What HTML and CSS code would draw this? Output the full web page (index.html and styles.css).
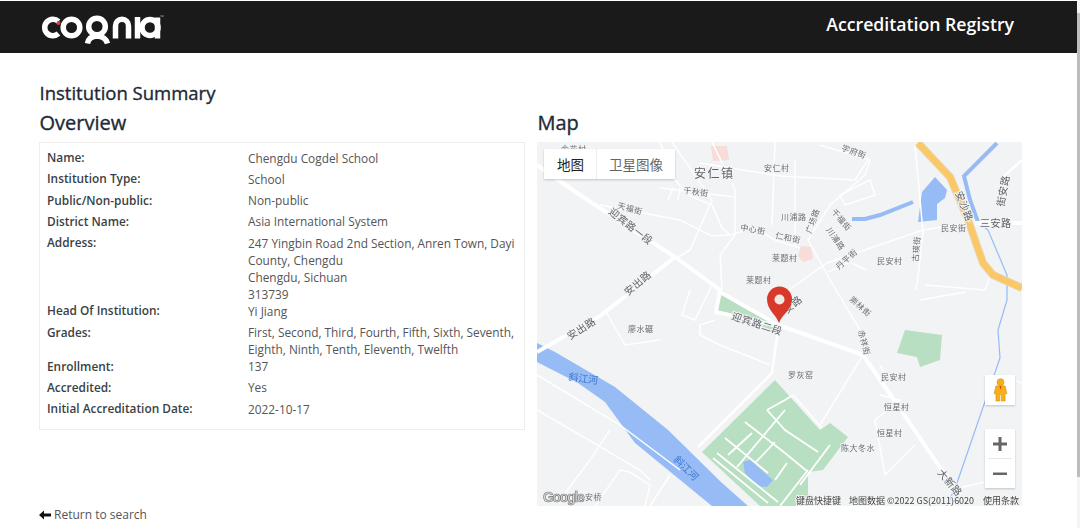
FILE: index.html
```html
<!DOCTYPE html>
<html lang="en">
<head>
<meta charset="utf-8">
<title>Accreditation Registry</title>
<link rel="stylesheet" href="styles.css">
</head>
<body>
<header class="topbar">
  <svg class="logo" viewBox="40 13 125 32" role="img" aria-label="cognia">
    <g class="logo-stroke">
      <path d="M58.500 21.500 A8.200 8.200 0 1 0 58.500 33.500"/>
      <circle cx="71.500" cy="27.500" r="8.300"/>
      <circle cx="97" cy="26.500" r="8.300"/>
      <path d="M87.500 43.500 Q88.500 36.500 97 36 Q105.500 36.500 107.500 43.500"/>
      <path d="M115.500 38.500 V26 A6.200 6.500 0 0 1 128.500 26 V38.500"/>
      <path d="M137.500 17 V38.500"/>
      <circle cx="150" cy="27.500" r="8"/>
      <path d="M157.500 17.500 V38.500"/>
    </g>
    <circle class="logo-dot" cx="58.500" cy="23" r="2"/>
    <text class="logo-tm" x="160" y="19">™</text>
  </svg>
  <div class="app-title">Accreditation Registry</div>
</header>

<main class="page">
  <h1 class="page-title">Institution Summary</h1>
  <div class="columns">
    <section class="col">
      <h2 class="section-title">Overview</h2>
      <dl class="card">
        <dt>Name:</dt><dd>Chengdu Cogdel School</dd>
        <dt>Institution Type:</dt><dd>School</dd>
        <dt>Public/Non-public:</dt><dd>Non-public</dd>
        <dt>District Name:</dt><dd>Asia International System</dd>
        <dt>Address:</dt><dd>247 Yingbin Road 2nd Section, Anren Town, Dayi County, Chengdu<br>Chengdu, Sichuan<br>313739</dd>
        <dt>Head Of Institution:</dt><dd>Yi Jiang</dd>
        <dt>Grades:</dt><dd>First, Second, Third, Fourth, Fifth, Sixth, Seventh, Eighth, Ninth, Tenth, Eleventh, Twelfth</dd>
        <dt>Enrollment:</dt><dd>137</dd>
        <dt>Accredited:</dt><dd>Yes</dd>
        <dt>Initial Accreditation Date:</dt><dd>2022-10-17</dd>
      </dl>
    </section>
    <section class="col">
      <h2 class="section-title">Map</h2>
      <div class="map">
        <svg class="map-canvas" viewBox="537 142 485 364" aria-label="Map">
          <rect class="land" x="537" y="142" width="485" height="364"/>
          <path class="pink" d="M711 146 L727 146 L729 160 L713 161 Z"/>
          <path class="pink" d="M801 246 L811 247 L813 259 L803 262 L798 256 Z"/>

          <path class="water" d="M537 343 L555 352 L615 387 L668 430 L722 483 L748 506 L712 506 L668 470 L635 443 L605 402 L578 383 L537 362 Z"/>
          <path class="water" d="M935 177 L947 190 L945 198 L937 204 L937 220 L918 222 L922 192 Z"/>
          <path class="canal" d="M852 219 L865 219 L880 215 L913 202"/>
          <path class="canal" d="M997 143 L964 176 L970 200 L978 222"/>
          <path class="stream" d="M978 222 L988 230 L1007 275 L1007 300 L998 330 L1000 358 L957 483 L947 506"/>

          <path class="park" d="M905 330 L942 335 L940 360 L920 367 L917 357 L897 353 Z"/>
          <path class="park" d="M722 293 L777 325 L773 330 L716 313 Z"/>
          <path class="park" d="M775 380 L702 452 L760 506 L808 506 L808 472 L823 470 L848 437 L830 423 L820 430 Z"/>
          <path class="water" d="M743 462 L750 460 L773 480 L767 487 L757 486 L745 473 Z"/>

          <g class="road-thin">
            <path d="M660 142 L675 180 L690 196 L712 205 L722 228 L730 235 L755 228 L775 240 L800 248"/>
            <path d="M600 205 L680 220 L712 236 L730 235"/>
            <path d="M660 188 L735 197"/>
            <path d="M673 188 L668 200 M680 188 L678 200"/>
            <path d="M672 142 L712 200 L690 250 L677 258"/>
            <path d="M712 142 L735 190 L735 235 L720 255 L722 290"/>
            <path d="M690 290 L682 315 L695 320 L712 285"/>
            <path d="M700 163 L780 176 L855 180 L868 160"/>
            <path d="M775 142 L772 225 M795 160 L795 245"/>
            <path d="M820 145 L870 160 L865 175 L830 205 L808 240 L830 280 L860 330"/>
            <path d="M840 195 L870 180 L875 195 L845 205 Z"/>
            <path d="M866 270 L850 262 L828 272"/>
            <path d="M915 145 L923 232 L917 285 L915 290"/>
            <path d="M925 285 L985 290 L993 270"/>
            <path d="M920 300 L965 292"/>
            <path d="M782 295 L827 263 L923 230 L970 223"/>
            <path d="M605 310 L625 345 L660 340"/>
            <path d="M700 335 L720 345 L770 365"/>
            <path d="M700 335 L700 325 L715 320"/>
            <path d="M537 375 L620 425 L680 470"/>
            <path d="M537 410 L640 470 L650 480"/>
            <path d="M610 430 L590 460 L560 500"/>
            <path d="M595 506 L620 470 L630 472 L650 485 L645 506"/>
            <path d="M650 506 L670 475"/>
            <path d="M880 365 L885 375"/>
            <path d="M863 355 L820 425"/>
            <path d="M880 395 L900 400 L875 420 L885 475 L915 445"/>
            <path d="M950 490 L985 482"/>
            <path d="M1015 380 L1022 383"/>
          </g>
          <g class="road-mid">
            <path d="M698 447 L772 373 L778 330"/>
            <path d="M1022 160 L1003 177 L1000 207"/>
          </g>
          <g class="road-main">
            <path d="M537 165 L580 195 L675 257 L720 290 L716 312 L778 326"/>
            <path d="M720 292 L778 325 L863 355 L903 413 L937 463 L960 495"/>
            <path d="M537 352 L600 316 L675 257"/>
            <path d="M975 223 L1022 223"/>
          </g>
          <g class="road-school">
            <path d="M745 422 L785 453 M725 438 L768 473 M713 458 L768 503 M717 453 L778 502"/>
            <path d="M737 467 L785 410 M755 463 L775 442 M775 480 L787 463 M728 455 L752 433"/>
            <path d="M767 410 L785 400 L793 395 M767 410 L785 430 L818 452 M793 395 L822 428"/>
            <path d="M785 453 L808 472 M780 506 L808 470 M800 485 L830 445"/>
          </g>
          <path class="highway-edge" d="M918 143 L950 177 L967 217 L983 263 L993 275 L1022 288"/>
          <path class="highway" d="M918 143 L950 177 L967 217 L983 263 L993 275 L1022 288"/>

          <g class="lbl">
            <text x="561" y="152">金花村</text>
            <text x="764" y="171">安仁村</text>
            <text x="841" y="150" transform="rotate(20 841 150)">学府街</text>
            <text x="683" y="193" transform="rotate(8 683 193)">千秋街</text>
            <text x="617" y="208" transform="rotate(15 617 208)">天福街</text>
            <text x="740" y="230" transform="rotate(10 740 230)">中心街</text>
            <text x="775" y="238" transform="rotate(12 775 238)">仁和街</text>
            <text x="781" y="220">川浦路</text>
            <text x="811" y="234" transform="rotate(-70 811 234)">广场路</text>
            <text x="831" y="212" transform="rotate(50 831 212)">千福街</text>
            <text x="826" y="230" transform="rotate(55 826 230)">川浦路</text>
            <text x="772" y="261">莱题村</text>
            <text x="746" y="283">莱题村</text>
            <text x="839" y="270" transform="rotate(-42 839 270)">丹平街</text>
            <text x="877" y="264">民安村</text>
            <text x="941" y="231">民安街</text>
            <text x="918" y="262" transform="rotate(-85 918 262)">古瑛街</text>
            <text x="849" y="300" transform="rotate(42 849 300)">崇林街</text>
            <text x="858" y="331" transform="rotate(75 858 331)">赤祥街</text>
            <text x="628" y="332">廖水碾</text>
            <text x="788" y="378">罗灰窑</text>
            <text x="881" y="380">民安村</text>
            <text x="884" y="410">恒星村</text>
            <text x="877" y="436">恒星村</text>
            <text x="841" y="451">陈大冬水</text>
            <text x="585" y="500">安桥</text>
          </g>
          <g class="lbl lbl-road">
            <text x="608" y="213" transform="rotate(38 608 213)">迎宾路一段</text>
            <text x="628" y="296" transform="rotate(-40 628 296)">安出路</text>
            <text x="570" y="340" transform="rotate(-32 570 340)">安出路</text>
            <text x="731" y="319" transform="rotate(18 731 319)">迎宾路二段</text>
            <text x="787" y="314" transform="rotate(-40 787 314)">安路</text>
            <text x="955" y="193" transform="rotate(68 955 193)">安沙路</text>
            <text x="980" y="227">三安路</text>
            <text x="1004" y="207" transform="rotate(-80 1004 207)">街安路</text>
            <text x="937" y="473" transform="rotate(50 937 473)">大新路</text>
          </g>
          <text class="lbl-town" x="694" y="178">安仁镇</text>
          <g class="lbl-water">
            <text x="568" y="380" transform="rotate(8 568 380)">斜江河</text>
            <text x="673" y="460" transform="rotate(45 673 460)">斜江河</text>
          </g>

          <path class="pin" d="M779 323 C775 313 767 310 767 299 A12 12 0 0 1 792 299 C792 310 783 313 779 323 Z"/>
          <circle class="pin-hole" cx="779.500" cy="299.500" r="5"/>

          <text class="google" x="543" y="502">Google</text>
          <g class="attrib">
            <text x="796" y="504">键盘快捷键</text>
            <text x="849" y="504">地图数据 ©2022 GS(2011)6020</text>
            <text x="983" y="504">使用条款</text>
          </g>
        </svg>

        <div class="map-type">
          <button class="map-tab map-tab-on">地图</button>
          <button class="map-tab">卫星图像</button>
        </div>
        <div class="map-tools">
          <div class="pegman">
            <svg viewBox="0 0 16 26" width="15" height="24">
              <circle class="peg-body" cx="8" cy="4.500" r="3.800"/>
              <path class="peg-body" d="M3 8.500 H13 L15 17 H13 V25 H8.800 V18 H7.200 V25 H3 V17 H1 Z"/>
              <path class="peg-tie" d="M7 9 H9 L8 13 Z"/>
            </svg>
          </div>
          <div class="zoom-box">
            <button class="zoom-btn" aria-label="Zoom in">
              <svg viewBox="0 0 14 14" width="14" height="14"><path d="M0 5.500 H5.500 V0 H8.500 V5.500 H14 V8.500 H8.500 V14 H5.500 V8.500 H0 Z"/></svg>
            </button>
            <span class="zoom-sep"></span>
            <button class="zoom-btn" aria-label="Zoom out">
              <svg viewBox="0 0 14 14" width="14" height="14"><path d="M0 5.500 H14 V8 H0 Z"/></svg>
            </button>
          </div>
        </div>
      </div>
    </section>
  </div>
  <a class="back" href="#">
    <svg class="back-icon" viewBox="0 0 12 10" width="12" height="10"><path d="M0 5 L5 0.500 V3.500 H12 V6.500 H5 V9.500 Z"/></svg>
    Return to search
  </a>
</main>
<div class="scrollbar"><div class="scrollbar-thumb"></div></div>
</body>
</html>
```

FILE: styles.css
```css
* { box-sizing: border-box; }
html, body { margin: 0; height: 528px; overflow: hidden; background: #fff; }
body { font-family: "Open Sans", "Noto Sans", sans-serif; color: #212529; padding-top: 1px; }

.topbar {
  height: 52px;
  margin-right: 3px;
  background: #1a1a1a;
  display: flex;
  align-items: flex-start;
  justify-content: space-between;
  padding: 11px 63px 0 40px;
}
.logo { width: 125px; height: 32px; margin-top: 1px; }
.logo-stroke { fill: none; stroke: #fff; stroke-width: 5.500; }
.logo-dot { fill: #e23a3f; }
.logo-tm { font-family: "Open Sans", sans-serif; font-size: 5px; fill: #aaa; }
.app-title { color: #fff; font-size: 17.700px; font-weight: 600; line-height: 24px; }

.page { padding: 27px 58px 0 39px; }
.page-title { margin: 0; padding-left: 0.500px; font-size: 18.500px; font-weight: 400; -webkit-text-stroke: 0.350px #212935; line-height: 26px; color: #212935; }
.columns { display: grid; grid-template-columns: 486px 485px; column-gap: 12px; margin-top: 4px; }
.section-title { margin: 0 0 6px; padding-left: 0.500px; font-size: 20px; font-weight: 400; -webkit-text-stroke: 0.350px #212935; line-height: 26px; color: #212935; }

.card {
  margin: 0;
  border: 1px solid #eee;
  padding: 6px 7px 7px;
  display: grid;
  grid-template-columns: 201px 1fr;
  grid-auto-rows: minmax(21.330px, auto);
  font-size: 11.850px;
  line-height: 17px;
}
.card dt { font-weight: 600; color: #3a3f45; }
.card dd { margin: 0.500px 0 -0.500px; color: #555; }

.map { position: relative; height: 364px; overflow: hidden; }
.map-canvas { display: block; width: 485px; height: 364px; filter: blur(0.400px); }
.land { fill: #f1f3f4; }
.pink { fill: #f8dcd8; }
.water { fill: #96bbf5; }
.canal { fill: none; stroke: #96bbf5; stroke-width: 4; }
.stream { fill: none; stroke: #96bbf5; stroke-width: 1.200; }
.park { fill: #b9dfc2; }
.road-thin { fill: none; stroke: #fff; stroke-width: 1.500; }
.road-mid { fill: none; stroke: #fff; stroke-width: 2.500; }
.road-main { fill: none; stroke: #fff; stroke-width: 4; }
.road-school { fill: none; stroke: #fff; stroke-width: 1.800; }
.highway-edge { fill: none; stroke: #e6d6a8; stroke-width: 8; }
.highway { fill: none; stroke: #fbc767; stroke-width: 6; }

.lbl { font-family: "Noto Sans CJK SC", sans-serif; font-size: 8px; fill: #6b6f73; stroke: #f1f3f4; stroke-width: 2px; paint-order: stroke; letter-spacing: 0.500px; }
.lbl-road { font-size: 10px; fill: #5f6368; }
.lbl-town { font-family: "Noto Sans CJK SC", sans-serif; font-size: 12px; letter-spacing: 1.500px; fill: #5f6368; stroke: #f1f3f4; stroke-width: 2px; paint-order: stroke; }
.lbl-water { font-family: "Noto Sans CJK SC", sans-serif; font-size: 10px; fill: #3f77d0; }
.pin { fill: #d8392b; }
.pin-hole { fill: #f3e9e4; }
.google { font-family: "Liberation Sans", sans-serif; font-size: 14px; font-weight: 700; letter-spacing: -1.300px; fill: #d4d6d7; stroke: #777; stroke-width: 0.600px; }
.attrib { font-family: "Noto Sans CJK SC", "Roboto", sans-serif; font-size: 9px; fill: #444; stroke: #f1f3f4; stroke-width: 2px; paint-order: stroke; }

.map-type { position: absolute; left: 7px; top: 7px; display: flex; background: #fff; box-shadow: 0 1px 2px rgba(0,0,0,.2); }
.map-tab { border: 0; background: #fff; height: 30px; padding: 0 12px; font-family: "Noto Sans CJK SC", sans-serif; font-size: 13.500px; color: #666; border-left: 1px solid #eee; }
.map-tab-on { color: #222; border-left: 0; padding-left: 13px; }

.map-tools { position: absolute; left: 448px; top: 233px; width: 30px; display: flex; flex-direction: column; gap: 24px; }
.pegman, .zoom-box { background: #fff; box-shadow: 0 1px 2px rgba(0,0,0,.2); display: flex; align-items: center; justify-content: center; }
.pegman { height: 30px; }
.peg-body { fill: #f6b01c; stroke: #c98a10; stroke-width: .5; }
.peg-tie { fill: #d8392b; }
.zoom-box { flex-direction: column; height: 59px; }
.zoom-btn { border: 0; padding: 0; background: #fff; height: 29px; width: 30px; display: flex; align-items: center; justify-content: center; }
.zoom-btn path { fill: #666; }
.zoom-sep { width: 24px; height: 1px; background: #e6e6e6; }

.back { display: flex; align-items: center; gap: 3px; margin-top: 1px; font-size: 12px; line-height: 16px; color: #555; text-decoration: none; }
.back-icon { fill: #111; flex: none; }

.scrollbar { position: absolute; top: 0; right: 0; width: 3px; height: 528px; background: #f4f4f4; }
.scrollbar-thumb { margin-top: 13px; height: 464px; background: #bdbdbd; }
```
